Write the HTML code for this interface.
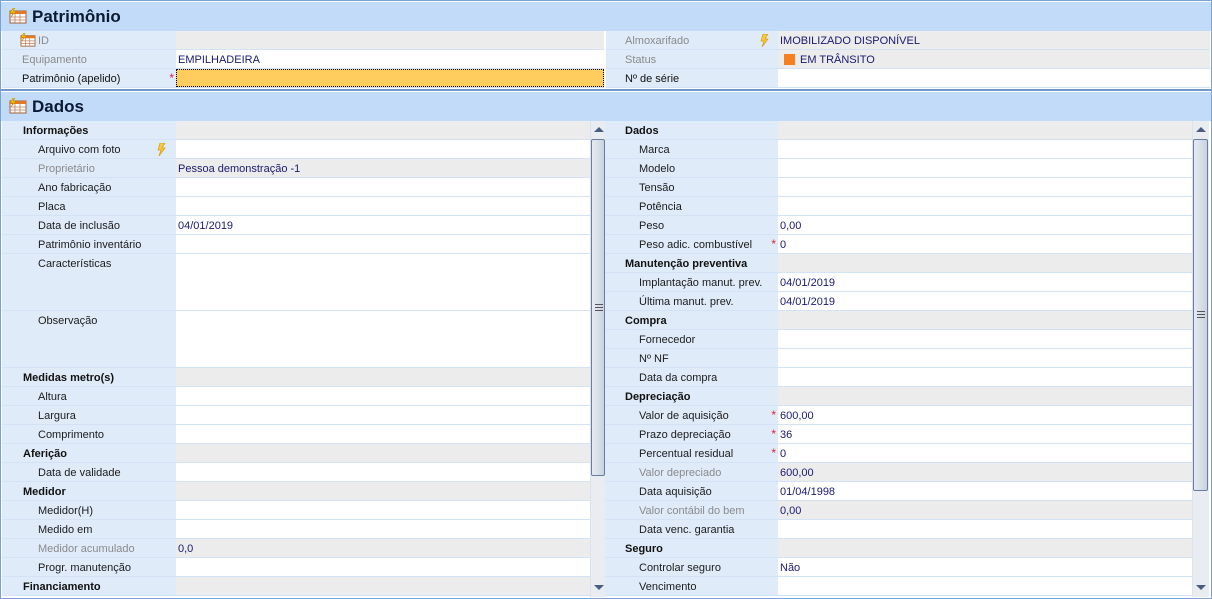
<!DOCTYPE html>
<html><head><meta charset="utf-8"><style>
*{margin:0;padding:0;box-sizing:border-box}
body{width:1212px;height:599px;overflow:hidden;background:#fff;font-family:"Liberation Sans",sans-serif;font-size:11px;color:#1b1b1b;position:relative}
.frame{position:absolute;left:0;top:0;width:1212px;height:599px;border:1px solid #7da2ce}
.hdr{position:absolute;left:1px;width:1210px;height:29px;background:#c2dbf9;font-weight:bold;font-size:17px;color:#0b1a33}
.hdr span{position:absolute;left:31px;top:5px}
.ico{position:absolute;left:8px;top:6px;width:18px;height:16px}
.sec{position:absolute}
.row{position:relative;height:19px;border-bottom:1px solid #d3e2f5;display:flex}
.l{background:#e0ebfa;position:relative;line-height:18px;padding-top:1px;white-space:nowrap}
.v{flex:1;background:#fff;line-height:18px;padding-top:1px;padding-left:2px;color:#1a1a6e;white-space:nowrap;position:relative}
.g .v,.d .v{background:#ececec}
.g .l{font-weight:bold;color:#111}
.d .l{color:#8a8a8a}
.star{position:absolute;right:2px;top:0px;color:#e0203a;font-size:12px}
.bolt{position:absolute;top:3px;width:11px;height:13px}
.sb{position:absolute;width:15px;background:#e9ecf1;border-left:1px solid #dde3ea}
.sb .th{position:absolute;left:0;width:14px;border:1px solid #6c7ba3;border-radius:2px;background:linear-gradient(90deg,#e6ebf2,#c9d3df)}
.up,.dn{position:absolute;left:3px;width:0;height:0;border-left:5px solid transparent;border-right:5px solid transparent}
.up{border-bottom:5px solid #4a5d80}.dn{border-top:5px solid #4a5d80}
.grip{position:absolute;left:3px;width:8px;height:7px;border-top:1px solid #555;border-bottom:1px solid #555}
.grip:after{content:"";position:absolute;left:0;top:2px;width:8px;height:1px;background:#555}
</style></head><body>
<div class="frame"></div>
<svg width="0" height="0" style="position:absolute"><defs>
<g id="ic"><rect x="1" y="3" width="16" height="12" fill="#fff" stroke="#a06030"/><rect x="1" y="3" width="16" height="3" fill="#e07a2a"/><path d="M1 9h16M1 12h16M6 6v9M11 6v9" stroke="#c08060" stroke-width=".8"/><path d="M4 0l-3 5h3l-2 4 5-6h-3l2-3z" fill="#f5c000" stroke="#b08000" stroke-width=".5"/></g>
<path id="bl" d="M5 0h5l-3 5h3l-6 8 2-6h-3z" fill="#f7c948" stroke="#d99a00" stroke-width=".7"/></defs></svg>
<div class="hdr" style="top:2px"><svg class="ico" viewBox="0 0 18 16"><use href="#ic"/></svg><span>Patrimônio</span></div>

<div class="sec" style="left:2px;top:31px;width:602px">
<div class="row d"><div class="l" style="width:174px;padding-left:36px"><svg style="position:absolute;left:18px;top:2px" width="16" height="14" viewBox="0 0 18 16"><use href="#ic"/></svg>ID</div><div class="v"></div></div>
<div class="row d"><div class="l" style="width:174px;padding-left:20px">Equipamento</div><div class="v" style="background:#fff">EMPILHADEIRA</div></div>
<div class="row"><div class="l" style="width:174px;padding-left:20px;color:#111">Patrimônio (apelido)<span class="star">*</span></div><div class="v" style="background:#ffcd5e;border:1px dotted #000"></div></div>
</div>
<div class="sec" style="left:606px;top:31px;width:604px">
<div class="row d"><div class="l" style="width:172px;padding-left:19px">Almoxarifado<svg class="bolt" style="left:152px" viewBox="0 0 11 13"><use href="#bl"/></svg></div><div class="v" style="background:#ececec">IMOBILIZADO DISPONÍVEL</div></div>
<div class="row d"><div class="l" style="width:172px;padding-left:19px">Status</div><div class="v" style="padding-left:22px"><span style="position:absolute;left:6px;top:4px;width:11px;height:11px;background:#f7801e"></span>EM TRÂNSITO</div></div>
<div class="row"><div class="l" style="width:172px;padding-left:19px;color:#111">Nº de série</div><div class="v"></div></div>
</div>
<div style="position:absolute;left:1px;top:89px;width:1210px;height:2px;background:#6f98cc"></div>
<div class="hdr" style="top:92px"><svg class="ico" viewBox="0 0 18 16"><use href="#ic"/></svg><span>Dados</span></div>

<div class="sec" style="left:2px;top:121px;width:588px">
<div class="row g"><div class="l" style="width:174px;padding-left:21px">Informações</div><div class="v"></div></div>
<div class="row"><div class="l" style="width:174px;padding-left:36px">Arquivo com foto<svg class="bolt" style="left:153px" viewBox="0 0 11 13"><use href="#bl"/></svg></div><div class="v"></div></div>
<div class="row d"><div class="l" style="width:174px;padding-left:36px">Proprietário</div><div class="v">Pessoa demonstração -1</div></div>
<div class="row"><div class="l" style="width:174px;padding-left:36px">Ano fabricação</div><div class="v"></div></div>
<div class="row"><div class="l" style="width:174px;padding-left:36px">Placa</div><div class="v"></div></div>
<div class="row"><div class="l" style="width:174px;padding-left:36px">Data de inclusão</div><div class="v">04/01/2019</div></div>
<div class="row"><div class="l" style="width:174px;padding-left:36px">Patrimônio inventário</div><div class="v"></div></div>
<div class="row" style="height:57px"><div class="l" style="width:174px;padding-left:36px">Características</div><div class="v"></div></div>
<div class="row" style="height:57px"><div class="l" style="width:174px;padding-left:36px">Observação</div><div class="v"></div></div>
<div class="row g"><div class="l" style="width:174px;padding-left:21px">Medidas metro(s)</div><div class="v"></div></div>
<div class="row"><div class="l" style="width:174px;padding-left:36px">Altura</div><div class="v"></div></div>
<div class="row"><div class="l" style="width:174px;padding-left:36px">Largura</div><div class="v"></div></div>
<div class="row"><div class="l" style="width:174px;padding-left:36px">Comprimento</div><div class="v"></div></div>
<div class="row g"><div class="l" style="width:174px;padding-left:21px">Aferição</div><div class="v"></div></div>
<div class="row"><div class="l" style="width:174px;padding-left:36px">Data de validade</div><div class="v"></div></div>
<div class="row g"><div class="l" style="width:174px;padding-left:21px">Medidor</div><div class="v"></div></div>
<div class="row"><div class="l" style="width:174px;padding-left:36px">Medidor(H)</div><div class="v"></div></div>
<div class="row"><div class="l" style="width:174px;padding-left:36px">Medido em</div><div class="v"></div></div>
<div class="row d"><div class="l" style="width:174px;padding-left:36px">Medidor acumulado</div><div class="v">0,0</div></div>
<div class="row"><div class="l" style="width:174px;padding-left:36px">Progr. manutenção</div><div class="v"></div></div>
<div class="row g"><div class="l" style="width:174px;padding-left:21px">Financiamento</div><div class="v"></div></div>
</div>
<div class="sb" style="left:590px;top:121px;height:476px"><div class="up" style="top:6px"></div><div class="th" style="top:18px;height:337px"><div class="grip" style="top:164px"></div></div><div class="dn" style="top:464px"></div></div>

<div class="sec" style="left:605px;top:121px;width:587px">
<div class="row g"><div class="l" style="width:173px;padding-left:20px">Dados</div><div class="v"></div></div>
<div class="row"><div class="l" style="width:173px;padding-left:34px">Marca</div><div class="v"></div></div>
<div class="row"><div class="l" style="width:173px;padding-left:34px">Modelo</div><div class="v"></div></div>
<div class="row"><div class="l" style="width:173px;padding-left:34px">Tensão</div><div class="v"></div></div>
<div class="row"><div class="l" style="width:173px;padding-left:34px">Potência</div><div class="v"></div></div>
<div class="row"><div class="l" style="width:173px;padding-left:34px">Peso</div><div class="v">0,00</div></div>
<div class="row"><div class="l" style="width:173px;padding-left:34px">Peso adic. combustível<span class="star">*</span></div><div class="v">0</div></div>
<div class="row g"><div class="l" style="width:173px;padding-left:20px">Manutenção preventiva</div><div class="v"></div></div>
<div class="row"><div class="l" style="width:173px;padding-left:34px">Implantação manut. prev.</div><div class="v">04/01/2019</div></div>
<div class="row"><div class="l" style="width:173px;padding-left:34px">Última manut. prev.</div><div class="v">04/01/2019</div></div>
<div class="row g"><div class="l" style="width:173px;padding-left:20px">Compra</div><div class="v"></div></div>
<div class="row"><div class="l" style="width:173px;padding-left:34px">Fornecedor</div><div class="v"></div></div>
<div class="row"><div class="l" style="width:173px;padding-left:34px">Nº NF</div><div class="v"></div></div>
<div class="row"><div class="l" style="width:173px;padding-left:34px">Data da compra</div><div class="v"></div></div>
<div class="row g"><div class="l" style="width:173px;padding-left:20px">Depreciação</div><div class="v"></div></div>
<div class="row"><div class="l" style="width:173px;padding-left:34px">Valor de aquisição<span class="star">*</span></div><div class="v">600,00</div></div>
<div class="row"><div class="l" style="width:173px;padding-left:34px">Prazo depreciação<span class="star">*</span></div><div class="v">36</div></div>
<div class="row"><div class="l" style="width:173px;padding-left:34px">Percentual residual<span class="star">*</span></div><div class="v">0</div></div>
<div class="row d"><div class="l" style="width:173px;padding-left:34px">Valor depreciado</div><div class="v">600,00</div></div>
<div class="row"><div class="l" style="width:173px;padding-left:34px">Data aquisição</div><div class="v">01/04/1998</div></div>
<div class="row d"><div class="l" style="width:173px;padding-left:34px">Valor contábil do bem</div><div class="v">0,00</div></div>
<div class="row"><div class="l" style="width:173px;padding-left:34px">Data venc. garantia</div><div class="v"></div></div>
<div class="row g"><div class="l" style="width:173px;padding-left:20px">Seguro</div><div class="v"></div></div>
<div class="row"><div class="l" style="width:173px;padding-left:34px">Controlar seguro</div><div class="v">Não</div></div>
<div class="row"><div class="l" style="width:173px;padding-left:34px">Vencimento</div><div class="v"></div></div>
</div>
<div class="sb" style="left:1192px;top:121px;height:476px;width:17px"><div class="up" style="top:6px;left:3px"></div><div class="th" style="top:18px;height:352px;width:15px"><div class="grip" style="top:171px"></div></div><div class="dn" style="top:464px"></div></div>
</body></html>
